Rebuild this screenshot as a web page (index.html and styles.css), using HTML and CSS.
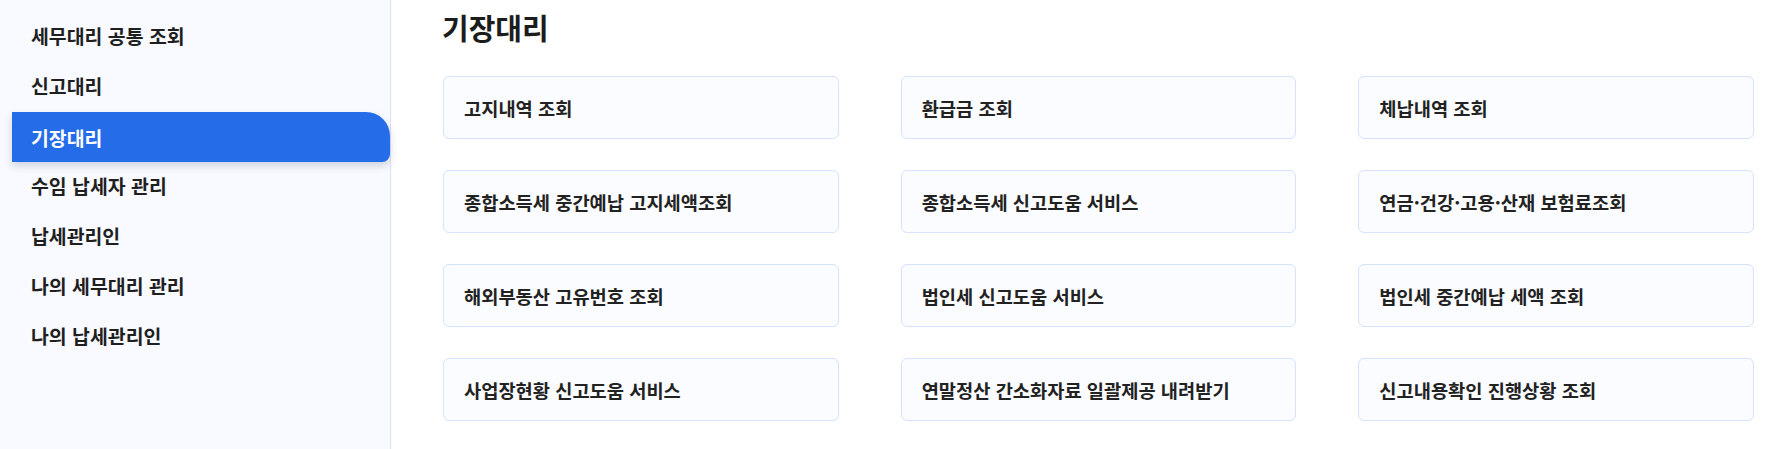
FILE: index.html
```html
<!DOCTYPE html>
<html lang="ko">
<head>
<meta charset="utf-8">
<title>기장대리</title>
<link rel="stylesheet" href="styles.css">
</head>
<body>
<div class="layout">
  <nav class="sidebar">
    <ul class="menu">
      <li class="menu-item">세무대리 공통 조회</li>
      <li class="menu-item">신고대리</li>
      <li class="menu-item active">기장대리</li>
      <li class="menu-item">수임 납세자 관리</li>
      <li class="menu-item">납세관리인</li>
      <li class="menu-item">나의 세무대리 관리</li>
      <li class="menu-item">나의 납세관리인</li>
    </ul>
  </nav>
  <main class="content">
    <h1 class="title">기장대리</h1>
    <div class="grid">
      <a class="card">고지내역 조회</a>
      <a class="card">환급금 조회</a>
      <a class="card">체납내역 조회</a>
      <a class="card">종합소득세 중간예납 고지세액조회</a>
      <a class="card">종합소득세 신고도움 서비스</a>
      <a class="card">연금·건강·고용·산재 보험료조회</a>
      <a class="card">해외부동산 고유번호 조회</a>
      <a class="card">법인세 신고도움 서비스</a>
      <a class="card">법인세 중간예납 세액 조회</a>
      <a class="card">사업장현황 신고도움 서비스</a>
      <a class="card">연말정산 간소화자료 일괄제공 내려받기</a>
      <a class="card">신고내용확인 진행상황 조회</a>
    </div>
  </main>
</div>
</body>
</html>
```
FILE: styles.css
```css
* { box-sizing: border-box; }
html, body {
  margin: 0;
  padding: 0;
  background: #ffffff;
  font-family: "Noto Sans CJK KR", "Noto Sans", sans-serif;
  color: #222222;
}
.layout {
  display: flex;
  min-height: 449px;
}
.sidebar {
  width: 391px;
  flex: 0 0 391px;
  background: #f8faff;
  border-right: 1px solid #d6e3fb;
  padding: 10px 0 0 12px;
}
.menu {
  list-style: none;
  margin: 0;
  padding: 0;
  display: flex;
  flex-direction: column;
}
.menu-item {
  height: 50px;
  display: flex;
  align-items: center;
  padding-left: 19px;
  font-size: 19.4px;
  font-weight: 700;
  color: #1f1f1f;
}
.menu-item.active {
  margin-top: 2px;
  margin-bottom: -2px;
  background: #256ce9;
  color: #ffffff;
  border-radius: 0 24px 8px 0;
  box-shadow: 0 4px 8px rgba(30, 40, 70, 0.18);
}
.content {
  flex: 1;
  padding: 8px 27px 0 51px;
}
.title {
  margin: 0 0 30px 0;
  font-size: 29px;
  line-height: 38px;
  font-weight: 700;
  color: #1c1c1c;
}
.grid {
  display: grid;
  grid-template-columns: repeat(3, 1fr);
  column-gap: 62px;
  row-gap: 31px;
  margin-left: 1px;
}
.card {
  height: 63px;
  display: flex;
  align-items: center;
  padding-left: 20px;
  background: #fafcff;
  border: 1px solid #d5e3fb;
  border-radius: 6px;
  font-size: 18.7px;
  font-weight: 700;
  color: #222222;
  text-decoration: none;
}
```
